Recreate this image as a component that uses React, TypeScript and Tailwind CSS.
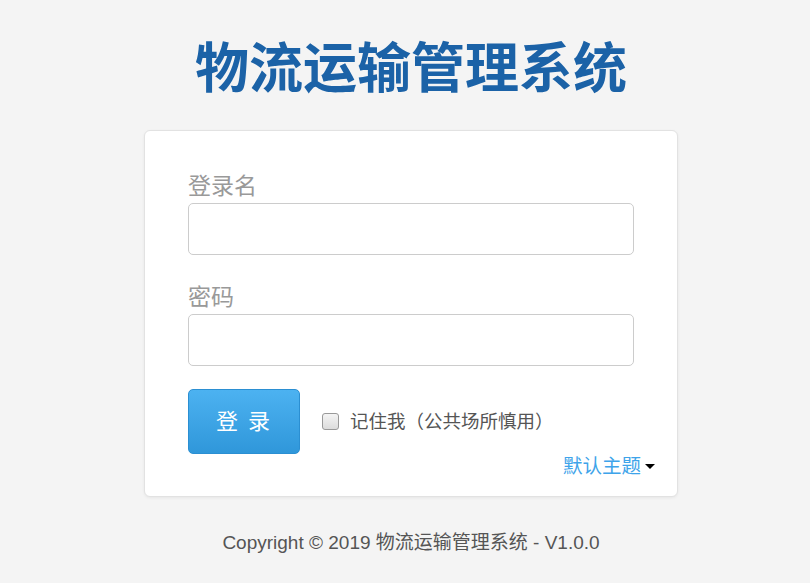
const FONT = '"Liberation Sans", "Noto Sans CJK SC", sans-serif';

function Field({ label, type }: { label: string; type: string }) {
  return (
    <div>
      <div className="text-[23px] leading-[30px] text-[#999] mb-[2px]">{label}</div>
      <input
        type={type}
        className="block w-full h-[52px] rounded-[5px] border border-[#ccc] bg-white px-3 outline-none"
      />
    </div>
  );
}

export default function App() {
  return (
    <div
      className="min-h-screen bg-[#f4f4f4] flex flex-col items-center pl-3"
      style={{ fontFamily: FONT }}
    >
      <h1 className="mt-[42px] text-[54px] leading-none font-bold text-[#1b62a7]">
        物流运输管理系统
      </h1>

      <div className="mt-[34px] w-[534px] bg-white border border-[#e2e2e2] rounded-md shadow-[0_1px_3px_rgba(0,0,0,0.06)] pt-[40px] pb-[18px] pl-[43px] pr-[22px]">
        <div className="pr-[21px] flex flex-col gap-[27px]">
          <Field label="登录名" type="text" />
          <Field label="密码" type="password" />
        </div>

        <div className="mt-[23px] flex items-center">
          <button className="w-[112px] h-[65px] rounded-[5px] border border-[#2b8fd2] bg-gradient-to-b from-[#4cb2f1] to-[#2f97da] text-white text-[22px] tracking-[2px]">
            登 录
          </button>
          <label className="ml-[22px] flex items-center text-[18.5px] text-[#555]">
            <span className="w-[17px] h-[17px] rounded-[3px] border border-[#999] bg-gradient-to-b from-[#f4f4f4] to-[#dcdcdc]" />
            <span className="ml-[11px]">记住我（公共场所慎用）</span>
          </label>
        </div>

        <div className="flex justify-end items-center text-[19.5px] leading-[24px]">
          <span className="text-[#3ea4ea]">默认主题</span>
          <span className="ml-[4px] w-0 h-0 border-l-[5px] border-r-[5px] border-t-[5px] border-l-transparent border-r-transparent border-t-black" />
        </div>
      </div>

      <div className="mt-[34px] text-[19px] leading-[24px] text-[#555]">
        Copyright © 2019 物流运输管理系统 - V1.0.0
      </div>
    </div>
  );
}
